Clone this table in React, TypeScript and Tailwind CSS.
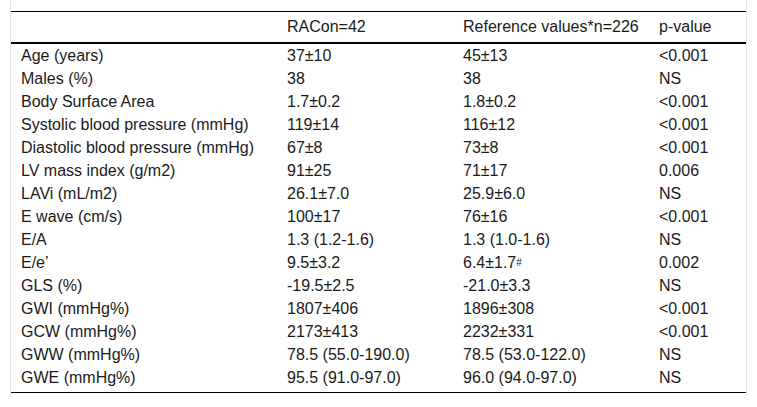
import React from "react";

const rows: [string, React.ReactNode, React.ReactNode, string][] = [
  ["Age (years)", "37±10", "45±13", "<0.001"],
  ["Males (%)", "38", "38", "NS"],
  ["Body Surface Area", "1.7±0.2", "1.8±0.2", "<0.001"],
  ["Systolic blood pressure (mmHg)", "119±14", "116±12", "<0.001"],
  ["Diastolic blood pressure (mmHg)", "67±8", "73±8", "<0.001"],
  ["LV mass index (g/m2)", "91±25", "71±17", "0.006"],
  ["LAVi (mL/m2)", "26.1±7.0", "25.9±6.0", "NS"],
  ["E wave (cm/s)", "100±17", "76±16", "<0.001"],
  ["E/A", "1.3 (1.2-1.6)", "1.3 (1.0-1.6)", "NS"],
  [
    "E/e’",
    "9.5±3.2",
    <span>
      6.4±1.7<sup className="text-[10px] relative -top-[2px]">#</sup>
    </span>,
    "0.002",
  ],
  ["GLS (%)", "-19.5±2.5", "-21.0±3.3", "NS"],
  ["GWI (mmHg%)", "1807±406", "1896±308", "<0.001"],
  ["GCW (mmHg%)", "2173±413", "2232±331", "<0.001"],
  ["GWW (mmHg%)", "78.5 (55.0-190.0)", "78.5 (53.0-122.0)", "NS"],
  ["GWE (mmHg%)", "95.5 (91.0-97.0)", "96.0 (94.0-97.0)", "NS"],
];

const cols = "grid grid-cols-[266px_176px_196px_97px]";

export default function App() {
  return (
    <div
      className="w-[757px] h-[407px] bg-white text-[16px] leading-[18px] text-[#1a1a1a]"
      style={{ fontFamily: '"Liberation Sans", Arial, sans-serif' }}
    >
      <div className="ml-[10px] w-[737px] h-[395px] border-x border-[#e6e6e6] pt-[11px]">
        <div className="border-t border-black">
          <div className={`${cols} h-[32px] items-center border-b-2 border-black`}>
            <div className="px-[10px]"></div>
            <div className="px-[10px]">RACon=42</div>
            <div className="px-[10px]">Reference values*n=226</div>
            <div className="px-[10px]">p-value</div>
          </div>
          <div className="border-b border-black pb-[3px]">
            {rows.map((r, i) => (
              <div key={i} className={`${cols} h-[23px] items-center`}>
                <div className="px-[10px] whitespace-nowrap">{r[0]}</div>
                <div className="px-[10px] whitespace-nowrap">{r[1]}</div>
                <div className="px-[10px] whitespace-nowrap">{r[2]}</div>
                <div className="px-[10px] whitespace-nowrap">{r[3]}</div>
              </div>
            ))}
          </div>
        </div>
      </div>
    </div>
  );
}
